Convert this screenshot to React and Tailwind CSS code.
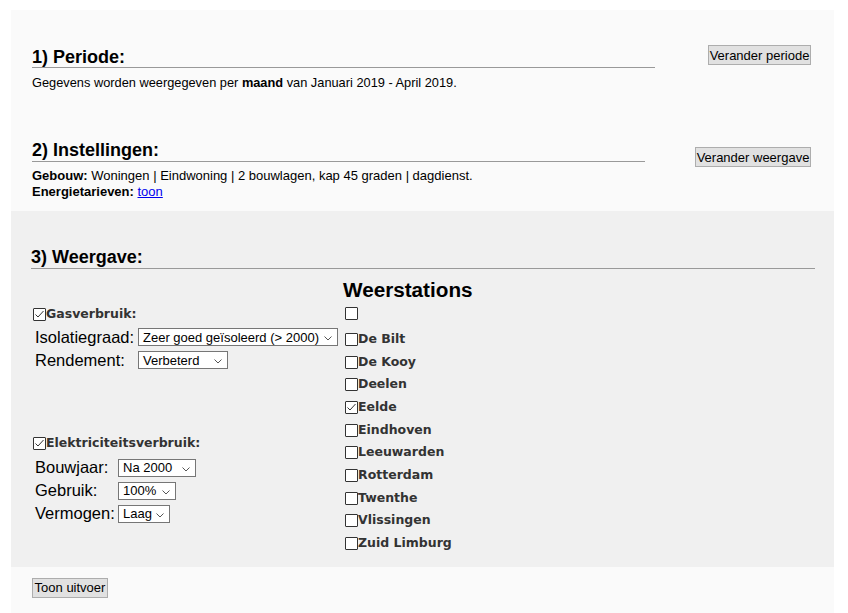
import React from "react";

// checkbox zoals Windows hem tekent: vierkant met dunne vink
function Box({ checked }) {
  return (
    <span className="inline-flex h-[13px] w-[13px] shrink-0 items-center justify-center rounded-[1px] border border-[#333] bg-white">
      {checked && (
        <svg width="11" height="11" viewBox="0 0 11 11">
          <path d="M1.5 5.5 L4 8 L9.5 2" fill="none" stroke="#333" strokeWidth="1" />
        </svg>
      )}
    </span>
  );
}

function Keuze({ value, className }) {
  return (
    <div
      className={
        "relative flex h-[18px] items-center border border-[#767676] bg-white pl-[4px] text-[13px] leading-none text-black " +
        className
      }
    >
      <span>{value}</span>
      <svg className="absolute right-[5px] top-[7px]" width="8" height="5" viewBox="0 0 8 5">
        <path d="M0.5 0.5 L4 4 L7.5 0.5" fill="none" stroke="#555" strokeWidth="1" />
      </svg>
    </div>
  );
}

function Knop({ children, className }) {
  return (
    <button
      className={
        "flex h-[20px] shrink-0 items-center justify-center border border-[#adadad] bg-[#e1e1e1] text-[13px] leading-none text-black " +
        className
      }
    >
      {children}
    </button>
  );
}

const stations = [
  "De Bilt",
  "De Kooy",
  "Deelen",
  "Eelde",
  "Eindhoven",
  "Leeuwarden",
  "Rotterdam",
  "Twenthe",
  "Vlissingen",
  "Zuid Limburg",
];

function App() {
  return (
    <div className="flex h-screen flex-col overflow-hidden bg-white pl-[11px] pt-[10px] font-['Liberation_Sans',Arial,sans-serif] text-black">
      <div className="flex w-[823px] flex-1 flex-col bg-[#fafafa]">
        {/* 1) Periode */}
        <section className="pl-[21px] pr-[23px] pt-[35px]">
          <div className="flex items-start justify-between">
            <h2 className="mt-[2px] w-[623px] border-b border-[#999] text-[18px] font-bold leading-[20px]">1) Periode:</h2>
            <Knop className="w-[103px]">Verander periode</Knop>
          </div>
          <p className="mt-[7px] text-[12.8px] leading-[15px]">
            Gegevens worden weergegeven per <b>maand</b> van Januari 2019 - April 2019.
          </p>
        </section>

        {/* 2) Instellingen */}
        <section className="pb-[11px] pl-[21px] pr-[23px] pt-[49px]">
          <div className="flex items-start justify-between">
            <h2 className="w-[613px] border-b border-[#999] text-[18px] font-bold leading-[22px]">2) Instellingen:</h2>
            <Knop className="mt-[8px] w-[116px]">Verander weergave</Knop>
          </div>
          <div className="mt-[1px] text-[13px] leading-[16px]">
            <div>
              <b>Gebouw:</b> Woningen | Eindwoning | 2 bouwlagen, kap 45 graden | dagdienst.
            </div>
            <div>
              <b>Energietarieven:</b>{" "}
              <a href="#" className="text-[#0000ee] underline">
                toon
              </a>
            </div>
          </div>
        </section>

        {/* 3) Weergave */}
        <section className="bg-[#f0f0f0] pb-[12px] pl-[20px] pr-[19px] pt-[35px]">
          <h2 className="border-b border-[#999] text-[18px] font-bold leading-[22px]">3) Weergave:</h2>
          <div className="flex items-start">
            <div className="w-[312px] pl-[2px] pt-[33.5px]">
              <div className="flex h-[23px] items-center">
                <Box checked />
                <span className="font-['DejaVu_Sans',Verdana,sans-serif] text-[12.5px] font-bold text-[#333]">
                  Gasverbruik:
                </span>
              </div>
              <div className="flex h-[23px] items-center pl-[2px] text-[16.5px]">
                <span className="w-[103px]">Isolatiegraad:</span>
                <Keuze value="Zeer goed geïsoleerd (> 2000)" className="w-[200px]" />
              </div>
              <div className="flex h-[23px] items-center pl-[2px] text-[16.5px]">
                <span className="w-[103px]">Rendement:</span>
                <Keuze value="Verbeterd" className="w-[90px]" />
              </div>

              <div className="mt-[60px] flex h-[23px] items-center">
                <Box checked />
                <span className="font-['DejaVu_Sans',Verdana,sans-serif] text-[12.5px] font-bold text-[#333]">
                  Elektriciteitsverbruik:
                </span>
              </div>
              <div className="mt-[1.5px] flex h-[23px] items-center pl-[2px] text-[16.5px]">
                <span className="w-[83px]">Bouwjaar:</span>
                <Keuze value="Na 2000" className="w-[78px]" />
              </div>
              <div className="flex h-[23px] items-center pl-[2px] text-[16.5px]">
                <span className="w-[83px]">Gebruik:</span>
                <Keuze value="100%" className="w-[58px]" />
              </div>
              <div className="flex h-[23px] items-center pl-[2px] text-[16.5px]">
                <span className="w-[83px]">Vermogen:</span>
                <Keuze value="Laag" className="w-[52px]" />
              </div>
            </div>

            <div className="pt-[9px]">
              <h3 className="text-[20.7px] font-bold leading-[24px]">Weerstations</h3>
              <div className="flex h-[26px] items-start pl-[2px] pt-[5px]">
                <Box />
              </div>
              {stations.map((s) => (
                <div key={s} className="flex h-[22.7px] items-center pl-[2px]">
                  <Box checked={s === "Eelde"} />
                  <span className="font-['DejaVu_Sans',Verdana,sans-serif] text-[12.5px] font-bold text-[#333]">{s}</span>
                </div>
              ))}
            </div>
          </div>
        </section>

        <div className="pl-[21px] pt-[11px]">
          <Knop className="w-[76px]">Toon uitvoer</Knop>
        </div>
      </div>
    </div>
  );
}

export default App;
